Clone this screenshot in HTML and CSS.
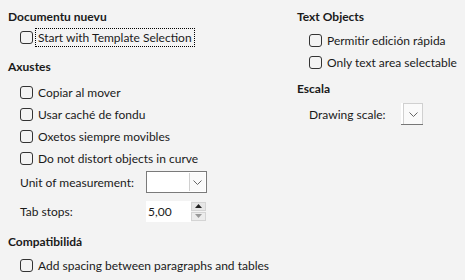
FILE: index.html
```html
<!DOCTYPE html>
<html>
<head>
<meta charset="utf-8">
<link rel="stylesheet" href="styles.css">
</head>
<body>
<div class="page">
  <div class="col left">
    <div class="heading">Documentu nuevu</div>
    <div class="row r-first"><span class="cb"></span><span class="lbl focus">Start with Template Selection</span></div>
    <div class="heading h-next">Axustes</div>
    <div class="row r-after"><span class="cb"></span><span class="lbl">Copiar al mover</span></div>
    <div class="row"><span class="cb"></span><span class="lbl">Usar caché de fondu</span></div>
    <div class="row"><span class="cb"></span><span class="lbl">Oxetos siempre movibles</span></div>
    <div class="row"><span class="cb"></span><span class="lbl">Do not distort objects in curve</span></div>
    <div class="frow f-unit"><span class="flabel">Unit of measurement:</span>
      <span class="combo"><span class="combo-text"></span><span class="combo-btn"><svg width="9" height="5" viewBox="0 0 9 5"><path d="M0.5 0.5 L4.5 4.5 L8.5 0.5" fill="none" stroke="#666" stroke-width="1"/></svg></span></span>
    </div>
    <div class="frow f-tab"><span class="flabel">Tab stops:</span>
      <span class="spin"><span class="spin-text">5,00</span><span class="spin-btns"><span class="sb up"><svg width="7" height="4" viewBox="0 0 7 4"><path d="M0 4 L3.5 0 L7 4 Z" fill="#222"/></svg></span><span class="sb down"><svg width="7" height="4" viewBox="0 0 7 4"><path d="M0 0 L3.5 4 L7 0 Z" fill="#999"/></svg></span></span></span>
    </div>
    <div class="heading h-compat">Compatibilidá</div>
    <div class="row r-compat"><span class="cb"></span><span class="lbl">Add spacing between paragraphs and tables</span></div>
  </div>
  <div class="col right">
    <div class="heading">Text Objects</div>
    <div class="row r-rfirst"><span class="cb"></span><span class="lbl">Permitir edición rápida</span></div>
    <div class="row"><span class="cb"></span><span class="lbl">Only text area selectable</span></div>
    <div class="heading h-escala">Escala</div>
    <div class="frow f-scale"><span class="flabel slabel">Drawing scale:</span>
      <span class="mini-combo"><span class="mini-btn"><svg width="9" height="5" viewBox="0 0 9 5"><path d="M0.5 0.5 L4.5 4.5 L8.5 0.5" fill="none" stroke="#666" stroke-width="1"/></svg></span></span>
    </div>
  </div>
</div>
</body>
</html>
```

FILE: styles.css
```css
html, body {
  margin: 0;
  padding: 0;
  background: #f3f3f3;
}
body {
  width: 465px;
  height: 280px;
  overflow: hidden;
  font-family: Lato, "Liberation Sans", sans-serif;
  font-size: 12px;
  color: #1a1a1a;
}
.page {
  display: grid;
  grid-template-columns: 289px 1fr;
  padding: 8px 0 0 8px;
}
.col {
  display: flex;
  flex-direction: column;
}
.heading {
  height: 18px;
  line-height: 18px;
  font-weight: bold;
  white-space: nowrap;
}
.row {
  height: 22px;
  display: flex;
  align-items: center;
  padding-left: 12px;
  white-space: nowrap;
}
.cb {
  width: 11px;
  height: 11px;
  border: 1px solid #333;
  border-radius: 3px;
  flex: none;
  margin-right: 5px;
}
.lbl {
  line-height: 15px;
}
.focus {
  outline: 1px dotted #000;
  outline-offset: 1px;
  padding: 0 1px;
  margin-left: -1px;
}
.r-first { margin-top: 0; }
.h-next { margin-top: 10px; }
.r-after { margin-top: 5px; }
.frow {
  height: 24px;
  display: flex;
  align-items: center;
  padding-left: 12px;
  white-space: nowrap;
}
.flabel {
  width: 126px;
  flex: none;
}
.f-unit { margin-top: 1px; }
.f-tab { margin-top: 6px; height: 22px; }
.h-compat { margin-top: 11px; }
.r-compat { margin-top: 3px; }
.combo {
  display: flex;
  width: 59px;
  height: 20px;
  border: 1px solid #7a7a7a;
  background: #fff;
}
.combo-text { flex: 1; }
.combo-btn {
  width: 15px;
  margin: 1px 1px 1px 0;
  border-left: 1px solid #d0d0d0;
  background: #fafafa;
  display: flex;
  align-items: center;
  justify-content: center;
}
.spin {
  display: flex;
  height: 21px;
  width: 60px;
  background: #fff;
  align-items: stretch;
}
.spin-text {
  flex: 1;
  padding-left: 2px;
  line-height: 21px;
}
.spin-btns {
  width: 15px;
  display: flex;
  flex-direction: column;
  justify-content: center;
  gap: 1px;
  background: #f3f3f3;
}
.sb {
  height: 9px;
  display: flex;
  align-items: center;
  justify-content: center;
  background: #e6e6e6;
  border: 1px solid #d4d4d4;
  box-sizing: border-box;
}
.sb.down { background: #ececec; }
.r-rfirst { margin-top: 3px; }
.h-escala { margin-top: 7px; }
.f-scale { margin-top: 4px; }
.slabel { width: 92px; }
.mini-combo {
  display: flex;
  width: 20px;
  height: 21px;
  padding-left: 2px;
  background: #fff;
  border-bottom: 1px solid #777;
}
.mini-btn {
  flex: 1;
  border: 1px solid #d0d0d0;
  border-bottom: none;
  background: #fafafa;
  display: flex;
  align-items: center;
  justify-content: center;
}
```
